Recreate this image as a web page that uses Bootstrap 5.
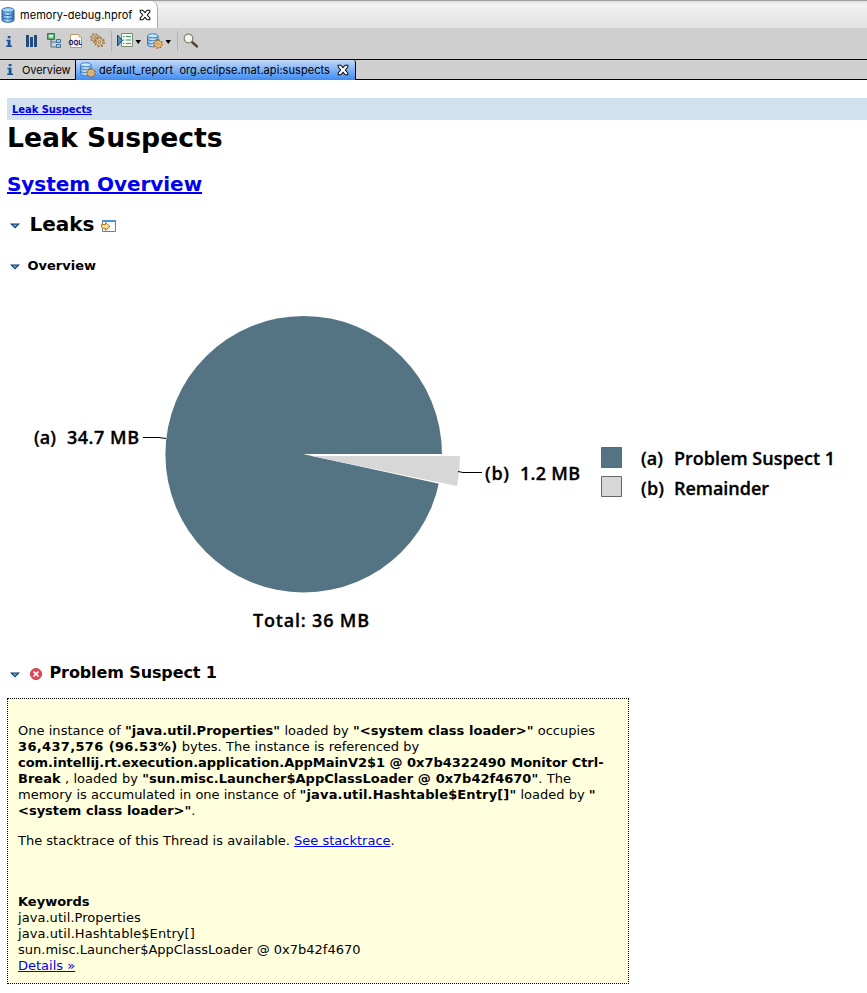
<!DOCTYPE html>
<html lang="en">
<head>
<meta charset="utf-8">
<title>memory-debug.hprof</title>
<link href="https://cdn.jsdelivr.net/npm/bootstrap@5.3.0/dist/css/bootstrap.min.css" rel="stylesheet">
<style>
body{font-family:"DejaVu Sans",sans-serif;font-size:13px;line-height:16px;color:#000;background:#fff;overflow:hidden}
a,a:hover{color:#0000ee}
svg{flex:none;display:block}
.ui{font-family:Inter,sans-serif;font-size:11px;line-height:14px;white-space:pre}
.editor-tabs{height:28px;background:linear-gradient(#dedede,#f2f2f2 12%,#e2e2e2);border-top:1px solid #9d9d9d}
.editor-tab{width:158px;background:#fff;border-right:1px solid #a5abb5;border-top-right-radius:7px;padding-left:1px}
.fname{margin-left:5px;width:119px;letter-spacing:.05px}
.tools{height:31px;background:#cfcfcf}
.views{height:21px;background:#cfcfcf;border-top:1px solid #000;border-bottom:1px solid #000}
.view-off{width:75px;padding-left:7px;gap:9px;letter-spacing:-.08px}
.view-on{width:281px;height:20px;background:linear-gradient(#c3d9f8,#3d8cf5);border:1px solid #000;border-width:0 1px;border-top-right-radius:3px;padding-left:3px}
.vname{margin-left:3px;width:238px;letter-spacing:.065px}
.report{padding:18px 0 0 7px}
.crumb{height:22px;background:#d2e1ee;padding:4px 0 0 5px;font-size:10px;letter-spacing:-.07px}
h1,h2,h3,h4{margin:0;font-weight:700;white-space:nowrap}
h1{font-size:26.67px;line-height:35px}
h2{font-size:20px;line-height:26px}
h3{font-size:16px;line-height:20px;letter-spacing:-.11px}
h4{font-size:13px;line-height:18px}
.t-sys{margin-top:16px;letter-spacing:-.04px}
.sec-leaks{margin:14px 0 0 3px;height:26px}
.sec-leaks h2{margin:0 6px 0 9.500px}
.sec-leaks .tri,.sec-prob .tri{margin-top:4px}
.sec-leaks .goto{margin-top:3px}
.sec-over{margin:20px 0 0 3px;height:18px}
.sec-over h4{margin-left:7.500px}
.sec-over .tri{margin-top:2px}
.chart{margin-top:15px;font-family:"Open Sans",sans-serif;font-weight:600;font-size:18px}
.chart text{stroke:#000;stroke-width:.3px}
.sec-prob{margin:23px 0 0 3px;height:20px}
.sec-prob h3{margin-left:7.500px}
.err{margin:2px 0 0 10px}
.suspect{width:622px;height:286px;background:#ffffdd;border:1px dotted #000;margin-top:15px;padding:24px 10px 0}
.suspect div{white-space:pre;height:16px}
.l1{word-spacing:.1px;letter-spacing:.012px}
.l2{word-spacing:.2px}
.l2 b{letter-spacing:.34px}
.l3{letter-spacing:-.035px}
.l4{word-spacing:.25px;letter-spacing:.005px}
.l5 b{letter-spacing:.14px}
.k1{letter-spacing:.05px}
.k2{letter-spacing:.08px}
.suspect .l7{margin-top:14px}
.suspect .l8{margin-top:45px}
</style>
</head>
<body>
<svg width="0" height="0" class="position-absolute">
<defs>
<linearGradient id="blue"><stop stop-color="#3f83c6"/><stop offset=".45" stop-color="#b7e0f8"/><stop offset="1" stop-color="#2f6db5"/></linearGradient>
<linearGradient id="pale"><stop stop-color="#7fb4e2"/><stop offset=".5" stop-color="#d3e9f8"/><stop offset="1" stop-color="#7fb0dd"/></linearGradient>
<symbol id="db" viewBox="0 0 14 16"><path d="M1 3v10c0 3 12 3 12 0V3z" fill="url(#blue)" stroke="#2462a8"/><ellipse cx="7" cy="3" rx="6" ry="2.3" fill="#a9d5f4" stroke="#2d70b5"/><path d="M1 6.2c0 3 12 3 12 0M1 9.7c0 3 12 3 12 0" fill="none" stroke="#2462a8"/></symbol>
<symbol id="gear" viewBox="0 0 10 10"><circle cx="5" cy="5" r="4.200" fill="none" stroke="#a5652b" stroke-width="1.400" stroke-dasharray="1.650 1.650"/><circle cx="5" cy="5" r="3.300" fill="#ffdc8c" stroke="#b8762e" stroke-width=".8"/><circle cx="5" cy="5" r="1.300" fill="#fff" stroke="#8a5020" stroke-width=".7"/></symbol>
<symbol id="geartan" viewBox="0 0 10 10"><circle cx="5" cy="5" r="4.200" fill="none" stroke="#99703f" stroke-width="1.400" stroke-dasharray="1.650 1.650"/><circle cx="5" cy="5" r="3.200" fill="#ecd3a6" stroke="#a87c48" stroke-width=".8"/><circle cx="5" cy="5" r="1.300" fill="#e4e0da" stroke="#84602f" stroke-width=".8"/></symbol>
<symbol id="dbgear" viewBox="0 0 17 16"><path d="M1.500 2.800v9c0 2.600 10.500 2.600 10.500 0v-9z" fill="url(#pale)" stroke="#3a7cbf"/><ellipse cx="6.750" cy="2.800" rx="5.250" ry="2" fill="#cde7f8" stroke="#3d80bf"/><path d="M1.500 5.800c0 2.600 10.500 2.600 10.500 0M1.500 8.900c0 2.600 10.500 2.600 10.500 0" fill="none" stroke="#3a7cbf"/><use href="#gear" x="7" y="6" width="10" height="10"/></symbol>
<symbol id="info" viewBox="0 0 6 11"><path d="M1.700 0h2.800v2.200H1.700zM.4 3.800h4.100v5.700H6V11H.2V9.500h1.500V5.300H.4z" fill="#17559a"/></symbol>
<symbol id="close" viewBox="0 0 12 12"><path d="M1.200 1.200h2.600L6 3.700l2.200-2.500h2.600v1.900L8.300 6l2.500 2.900v1.900H8.200L6 8.300l-2.200 2.500H1.200V8.900L3.700 6 1.200 3.100z" fill="#fff" stroke="#111" stroke-width="1.050"/></symbol>
<symbol id="down" viewBox="0 0 10 6"><path d="M0 .5h10L5 5.500z" fill="#0c3567"/><path d="M2.500 1.500h5L5 4z" fill="#58afd9"/></symbol>
</defs>
</svg>

<header>
<div class="editor-tabs d-flex">
<div class="editor-tab d-flex align-items-center ui"><svg width="14" height="16"><use href="#db"/></svg><span class="fname">memory-debug.hprof</span><svg width="12" height="12"><use href="#close"/></svg></div>
</div>
<div class="tools">
<svg width="210" height="31">
<use href="#info" x="6" y="8" width="6" height="11"/>
<path d="M26 7h3v12h-3zM30 9h3v10h-3zM34 7h3v12h-3z" fill="#264a7c"/>
<path d="M51 12v7h6M51 14h6" fill="none" stroke="#4f6f8f"/><path d="M47.500 5.500h7v6h-7z" fill="#68ae7a" stroke="#26824a"/><path d="M49 7h4v2.500h-4z" fill="#d5efda"/><path d="M56.500 11.500h4v3h-4zM56.500 16.500h4v3h-4z" fill="#a3cbe5" stroke="#3f769f"/>
<path d="M70.500 6.500h8l3 3v10h-11z" fill="#fafafa" stroke="#b19d6a"/><path d="M78.500 6.500v3h3z" fill="#e0be72"/><text x="68.500" y="17" font-family="DejaVu Sans" font-size="7" font-weight="700" textLength="13.500" lengthAdjust="spacingAndGlyphs" fill="#20206e">OQL</text>
<use href="#geartan" x="90" y="5" width="10" height="10"/><use href="#geartan" x="94" y="8.500" width="11" height="11"/>
<path d="M111.500 3v20M177.500 3v20" stroke="#b2b2b2"/>
<path d="M121.500 5.500h11v13h-11z" fill="#f4faf0" stroke="#7b8a70"/><path d="M123 8.500h1.500M126 8.500h5M123 12h1.500M126 12h5M123 15.500h1.500M126 15.500h5" stroke="#3c9467"/><path d="M117.500 7v11l5-5.500z" fill="#4a91b6" stroke="#124577"/>
<path d="M135.500 12h5.500l-2.750 4zM165.500 12h5.500l-2.750 4z"/>
<use href="#dbgear" x="146" y="5" width="17" height="16"/>
<path d="M192 14l5 4.500" stroke="#59482f" stroke-width="2.500" stroke-linecap="round"/><circle cx="188.500" cy="10.500" r="4.300" fill="#f3f7ed" stroke="#8a8170" stroke-width="1.300"/>
</svg>
</div>
<div class="views d-flex ui">
<div class="view-off d-flex align-items-center"><svg width="6" height="11"><use href="#info"/></svg><span>Overview</span></div>
<div class="view-on d-flex align-items-center"><svg width="17" height="16"><use href="#dbgear"/></svg><span class="vname">default_report  org.eclipse.mat.api:suspects</span><svg width="12" height="12"><use href="#close"/></svg></div>
</div>
</header>

<main class="report">
<div class="crumb fw-bold"><a href="#">Leak Suspects</a></div>
<h1>Leak Suspects</h1>
<h2 class="t-sys"><a href="#">System Overview</a></h2>
<div class="sec-leaks d-flex align-items-center"><svg class="tri" width="10" height="6"><use href="#down"/></svg><h2>Leaks</h2>
<svg class="goto" width="16" height="14"><path d="M1.500 1.500h13v11h-13z" fill="#f8fbfd" stroke="#6f7f86"/><path d="M1 1h14v2H1z" fill="#4f92d0"/><path d="M.500 5.500h4v-2l4.500 4-4.500 4v-2h-2l-2-1.500z" fill="#ffdf86" stroke="#a9772a"/></svg></div>
<div class="sec-over d-flex align-items-center"><svg class="tri" width="10" height="6"><use href="#down"/></svg><h4>Overview</h4></div>
<svg class="chart" width="860" height="350" viewBox="7 290 860 350">
<circle cx="303.700" cy="454.200" r="138.300" fill="#547484"/>
<path d="M303 454L461 454V488.500z" fill="#fff"/>
<path d="M311 456H460A156 156 0 0 1 457 486z" fill="#d7d7d7"/>
<path d="M143 437.500h16l7 1M458 471.500l5 1h19" fill="none" stroke="#000"/>
<path d="M601.500 447.500h20v20h-20z" fill="#547484" stroke="#666"/><path d="M601.500 476.500h20v20h-20z" fill="#d7d7d7" stroke="#666"/>
<text x="34" y="444" textLength="22">(a)</text><text x="67" y="444" textLength="72">34.7 MB</text>
<text x="485" y="480" textLength="24">(b)</text><text x="520" y="480" textLength="60">1.2 MB</text>
<text x="641" y="465" textLength="22">(a)</text><text x="674" y="465" textLength="161">Problem Suspect 1</text>
<text x="641" y="495" textLength="23">(b)</text><text x="674" y="495" textLength="95">Remainder</text>
<text x="253" y="627" textLength="116">Total: 36 MB</text>
</svg>
<div class="sec-prob d-flex align-items-center"><svg class="tri" width="10" height="6"><use href="#down"/></svg><svg class="err" width="12" height="12"><circle cx="6" cy="6" r="5.500" fill="#e04a58" stroke="#d23645"/><path d="M3.500 3.500l5 5M8.500 3.500l-5 5" stroke="#fff" stroke-width="1.700"/></svg><h3>Problem Suspect 1</h3></div>
<section class="suspect">
<div class="l1">One instance of <b>"java.util.Properties"</b> loaded by <b>"&lt;system class loader&gt;"</b> occupies</div>
<div class="l2"><b>36,437,576 (96.53%)</b> bytes. The instance is referenced by</div>
<div class="l3"><b>com.intellij.rt.execution.application.AppMainV2$1 @ 0x7b4322490 Monitor Ctrl-</b></div>
<div class="l4"><b>Break</b> , loaded by <b>"sun.misc.Launcher$AppClassLoader @ 0x7b42f4670"</b>. The</div>
<div class="l5">memory is accumulated in one instance of <b>"java.util.Hashtable$Entry[]"</b> loaded by <b>"</b></div>
<div class="l6"><b>&lt;system class loader&gt;"</b>.</div>
<div class="l7">The stacktrace of this Thread is available. <a href="#">See stacktrace</a>.</div>
<div class="l8"><b>Keywords</b></div>
<div class="k1">java.util.Properties</div>
<div class="k2">java.util.Hashtable$Entry[]</div>
<div>sun.misc.Launcher$AppClassLoader @ 0x7b42f4670</div>
<div><a href="#">Details »</a></div>
</section>
</main>
<script src="https://cdn.jsdelivr.net/npm/bootstrap@5.3.0/dist/js/bootstrap.bundle.min.js"></script>
</body>
</html>
